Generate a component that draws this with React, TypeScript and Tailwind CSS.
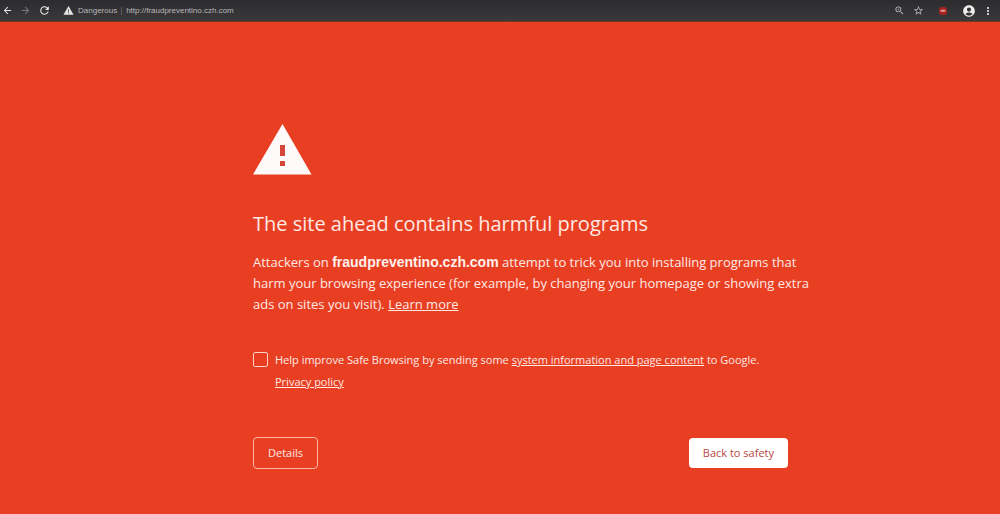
import React, { useState } from 'react';
import {
  MdAccountCircle,
  MdArrowBack,
  MdArrowForward,
  MdMoreVert,
  MdRefresh,
  MdStarBorder,
  MdWarning,
  MdZoomIn,
} from 'react-icons/md';

const SITE = 'fraudpreventino.czh.com';

// Browser toolbar with the address and the action icons
const Toolbar: React.FC = () => (
  <header className="flex items-center h-[22px] px-[2px] bg-linear-to-b from-[#2c2b2e] to-[#3a393c] border-b border-[#7a3528] text-[#e6e6e6]">
    <nav className="flex items-center gap-[7px]">
      <button type="button" aria-label="Back">
        <MdArrowBack size={11} />
      </button>
      <button type="button" aria-label="Forward" className="text-[#7d7c80]">
        <MdArrowForward size={11} />
      </button>
      <button type="button" aria-label="Reload">
        <MdRefresh size={13} />
      </button>
    </nav>
    <div className="flex flex-1 items-center ml-3 text-[8px] leading-none text-[#b9b8bb]">
      <MdWarning size={11} className="mr-1 text-[#e6e6e6]" />
      <span>Dangerous</span>
      <span className="w-px h-2 mx-1 bg-[#5f5e62]" />
      <span>http://{SITE}</span>
    </div>
    <div className="flex items-center pr-1">
      <button type="button" aria-label="Zoom" className="mr-2 text-[#b9b8bb]">
        <MdZoomIn size={11} />
      </button>
      <button type="button" aria-label="Bookmark" className="mr-[14px] text-[#b9b8bb]">
        <MdStarBorder size={11} />
      </button>
      <button type="button" aria-label="Extension" className="mr-[14px]">
        <svg width="10" height="10" viewBox="0 0 10 10">
          <path d="M3 1h4L9 3v4L7 9H3L1 7V3z" fill="#a8231f" />
          <rect x="2.500" y="3.800" width="5" height="2" rx="1" fill="#d9a09c" />
        </svg>
      </button>
      <button type="button" aria-label="Profile" className="mr-[6px] text-[#eeeeee]">
        <MdAccountCircle size={14} />
      </button>
      <button type="button" aria-label="Menu">
        <MdMoreVert size={12} />
      </button>
    </div>
  </header>
);

const App: React.FC = () => {
  const [report, setReport] = useState(false);

  return (
    <div className="flex flex-col min-h-screen bg-[#e83f23] font-['Liberation_Sans',sans-serif]">
      <Toolbar />

      <main className="w-full max-w-[820px] pl-[253px] pt-[102px] pb-8 text-[#ffe9e3] font-['Open_Sans',sans-serif]">
        <svg width="59" height="51" viewBox="0 0 59 51" role="img" aria-label="Warning">
          <path d="M29.500 0L58.500 50.500H0z" fill="#fffafa" />
          <path d="M27 21h5v11h-5zM27 37h5v5h-5z" fill="#d5463a" />
        </svg>

        <h1 className="mt-8 text-[20px] leading-[34px]">The site ahead contains harmful programs</h1>

        <p className="mt-[11px] text-[13px] leading-[21px]">
          Attackers on{' '}
          <strong className="font-['Liberation_Sans',sans-serif] text-[14px] leading-none text-[#fff1ed]">{SITE}</strong>{' '}
          attempt to trick you into installing programs that
          <br />
          harm your browsing experience (for example, by changing your homepage or showing extra
          <br />
          ads on sites you visit).{' '}
          <a href="#learn" className="underline">
            Learn more
          </a>
        </p>

        <div className="flex items-start gap-[7px] mt-[34px] text-[11px] leading-[22px]">
          <input
            id="report"
            type="checkbox"
            checked={report}
            onChange={(e) => setReport(e.target.checked)}
            className="appearance-none shrink-0 size-[15px] mt-[3px] border border-[#ffd0c5] rounded-xs checked:bg-[#ffe9e3]"
          />
          <label htmlFor="report">
            Help improve Safe Browsing by sending some{' '}
            <a href="#content" className="underline">
              system information and page content
            </a>{' '}
            to Google.
            <br />
            <a href="#privacy" className="underline">
              Privacy policy
            </a>
          </label>
        </div>

        <div className="flex items-center justify-between mt-11 pr-8 text-[11px] leading-5">
          <button type="button" className="h-8 px-[14px] border border-[#ffb5a5] rounded-sm">
            Details
          </button>
          <button type="button" className="h-[30px] px-[14px] rounded-sm bg-white text-[#b8473f]">
            Back to safety
          </button>
        </div>
      </main>
    </div>
  );
};

export default App;
